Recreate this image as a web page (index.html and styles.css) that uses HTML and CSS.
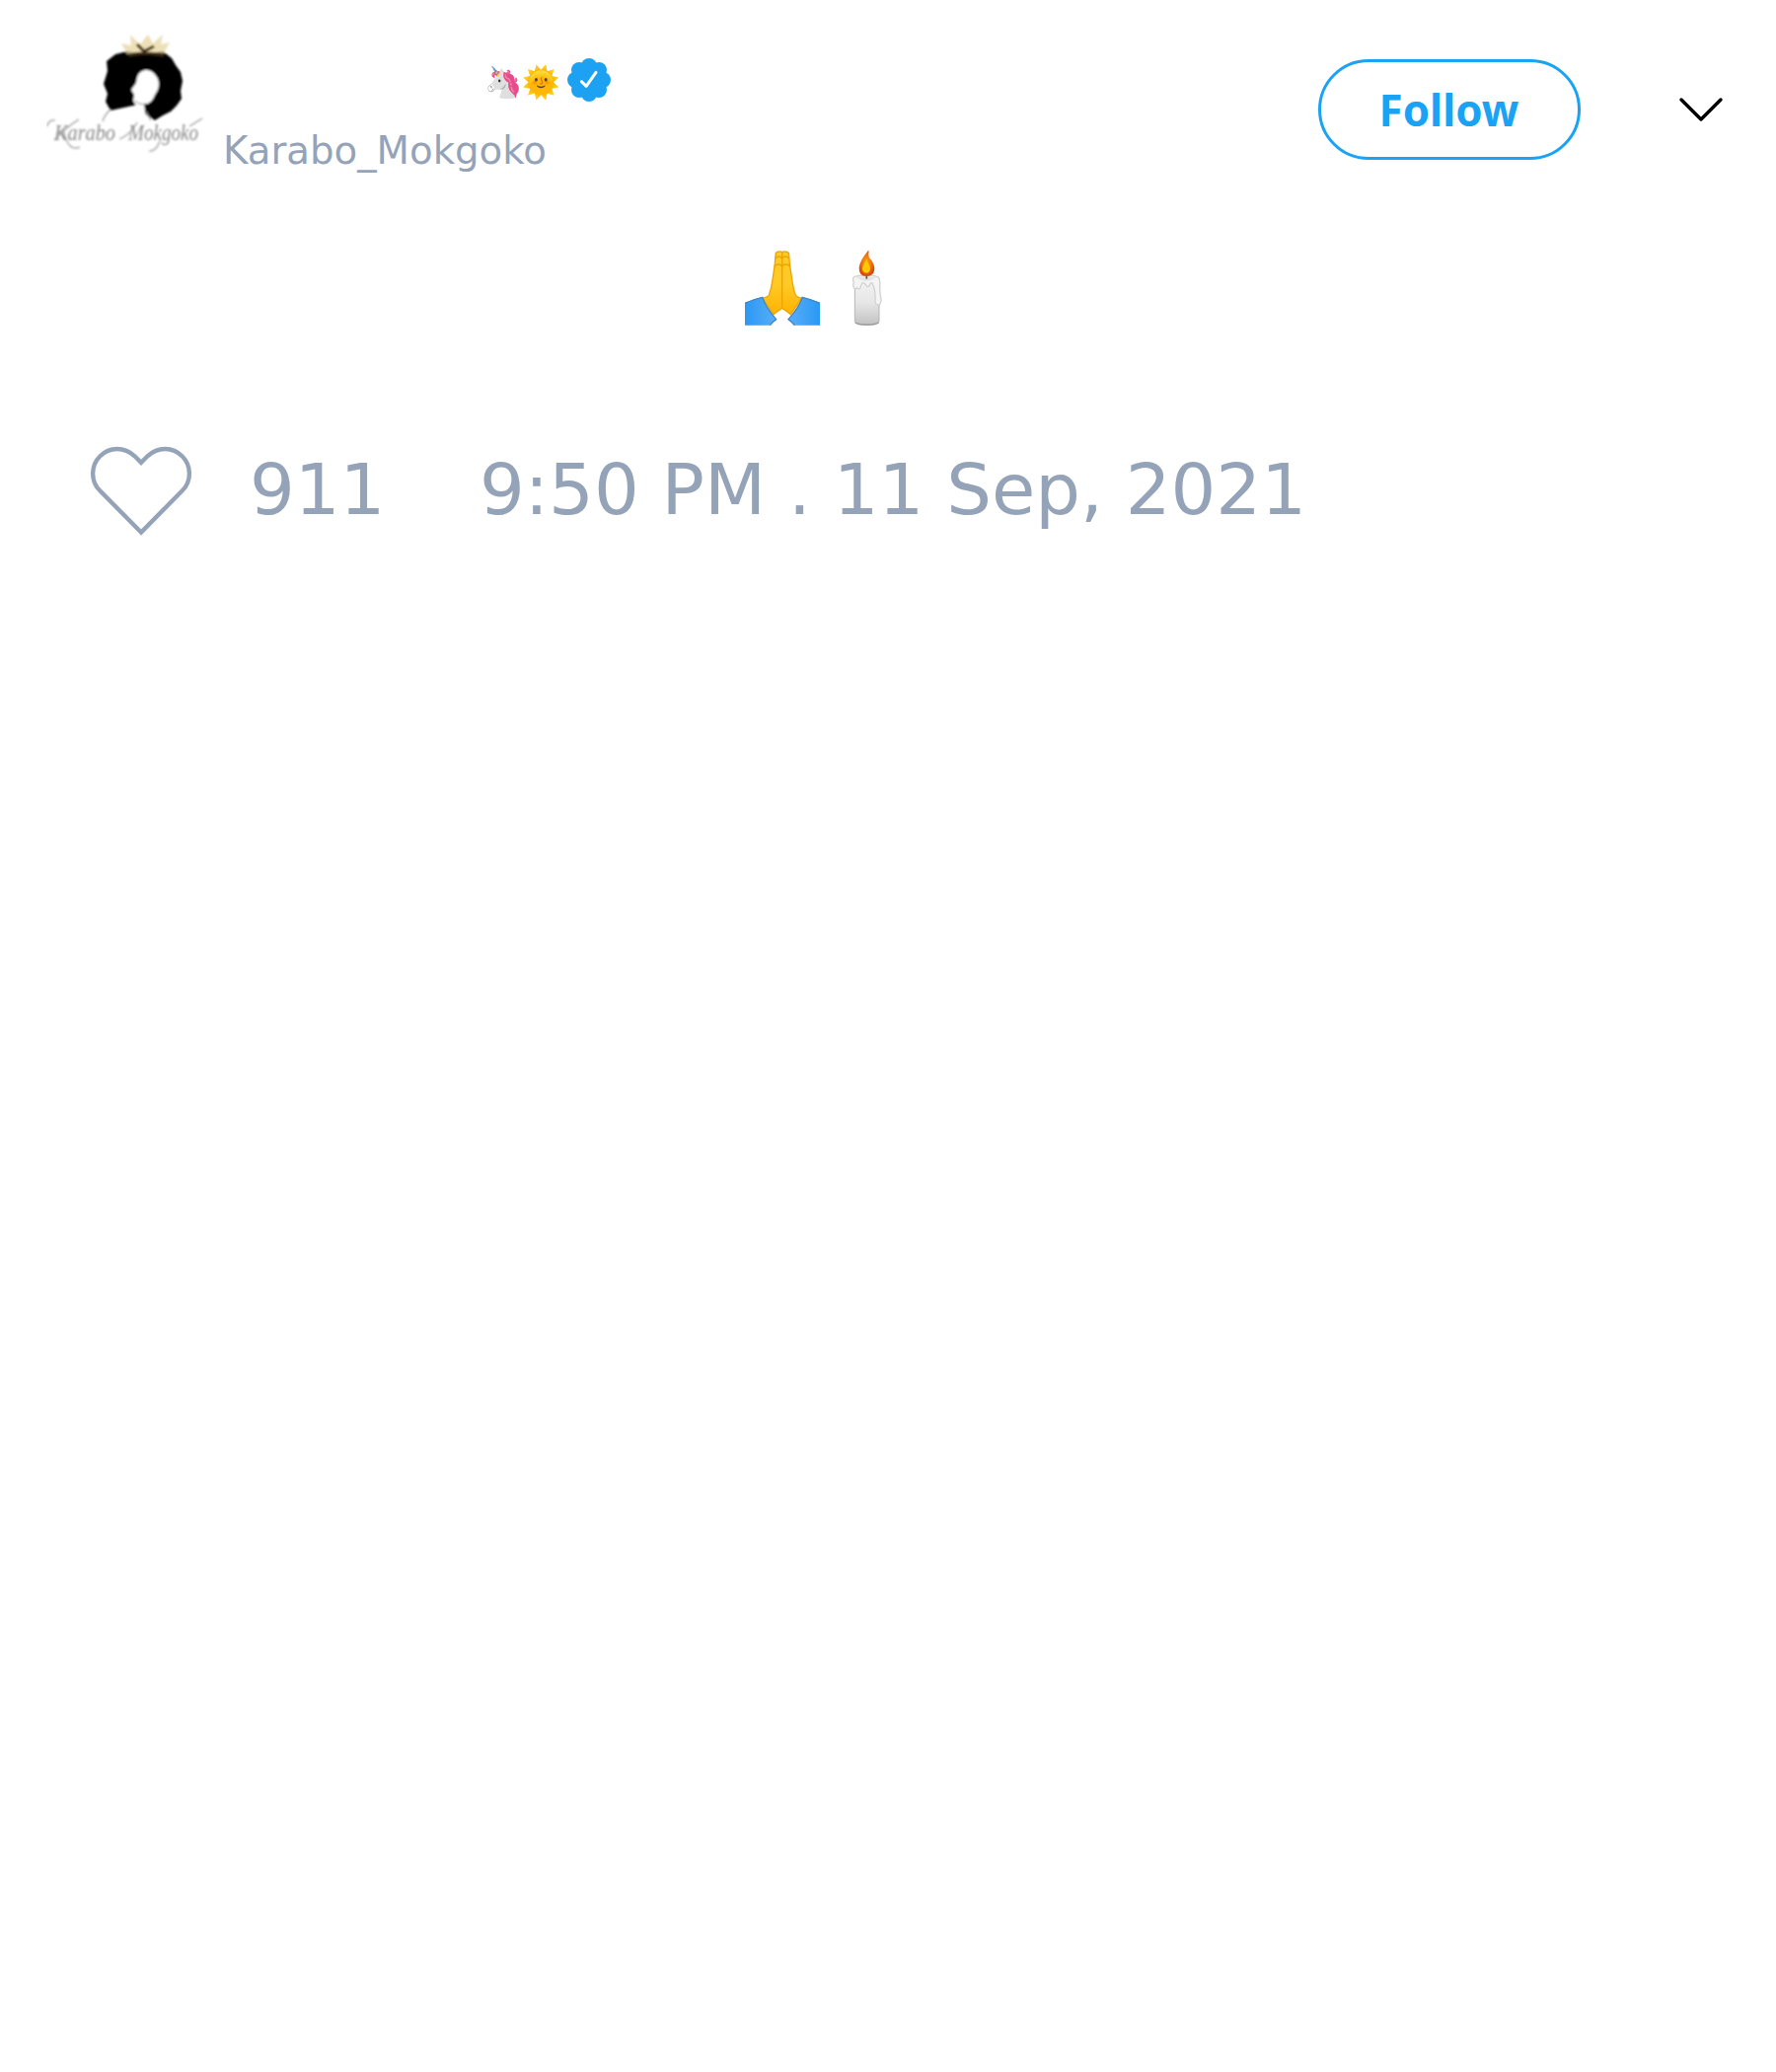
FILE: index.html
```html
<!DOCTYPE html>
<html lang="en">
<head>
<meta charset="utf-8">
<title>Karabo_Mokgoko</title>
<link rel="stylesheet" href="styles.css">
</head>
<body>
<article class="post">
  <header class="head">
    <svg class="avatar" viewBox="0 0 160 160" width="160" height="160">
      <defs>
        <filter id="soft"><feGaussianBlur stdDeviation="1"/></filter>
        <filter id="soft-text"><feGaussianBlur stdDeviation="0.8"/></filter>
      </defs>
      <g filter="url(#soft)">
        <path d="M61 32L70 25L82 22L100 25L118 22L127 29L131 36L136 43L138 52L136 62L137 70L132 77L126 83L118 87L110 92L101 86L98 77L88 77L65 82L60 73L62 65L58 55L62 42Z" fill="#030303"/>
        <path d="M100 41Q92 42 91 54L86 61L89 66L88 72L92 79L100 82L99 76Q107 75 110 66Q116 58 113 50Q108 40 100 41Z" fill="#fff"/>
        <path d="M90 72Q95 77 101 75" fill="none" stroke="#777" stroke-width="1"/>
        <path d="M82 25L76 14L86 16L85 5L95 15L103 5L108 14L118 5L116 15L125 13L119 24Q98 21 82 25Z" fill="#e6d6a0" opacity=".75"/>
        <path d="M84 26Q99 22 119 26M92 15L99 22L109 17" fill="none" stroke="#3a2b12" stroke-width="3"/>
        <path d="M65 81Q59 86 57 93M101 83L106 92" fill="none" stroke="#999" stroke-width="1.2"/>
      </g>
      <g filter="url(#soft-text)">
        <text x="8" y="112" class="signature" textLength="62" lengthAdjust="spacingAndGlyphs">Karabo</text>
        <text x="83" y="112" class="signature" textLength="71" lengthAdjust="spacingAndGlyphs">Mokgoko</text>
        <path d="M1 98Q2 91 9 92M8 112Q20 99 33 91M17 101Q22 125 34 119M74 111Q85 107 92 94M115 113Q111 124 104 123M145 98L158 90" fill="none" stroke="#999" stroke-width="1.2"/>
      </g>
    </svg>
    <div class="identity">
      <div class="name">
        <span class="name-emoji">🦄🌞</span>
        <svg class="verified" viewBox="-22 -22 44 44" width="44" height="44">
          <g fill="#1da1f2">
            <circle r="15"/>
            <circle cy="-14" r="8"/><circle cy="14" r="8"/><circle cx="-14" r="8"/><circle cx="14" r="8"/>
            <circle cx="-10" cy="-10" r="8"/><circle cx="10" cy="-10" r="8"/><circle cx="-10" cy="10" r="8"/><circle cx="10" cy="10" r="8"/>
          </g>
          <path d="M-7.6 1.7L-2.8 6.3L7 -7.6" fill="none" stroke="#fff" stroke-width="3" stroke-linecap="round" stroke-linejoin="round"/>
        </svg>
      </div>
      <div class="handle">Karabo_Mokgoko</div>
    </div>
    <button class="follow">Follow</button>
    <svg class="chevron" viewBox="0 0 48 28" width="48" height="28">
      <path d="M4 4L24 24L44 4" fill="none" stroke="#000" stroke-width="3.4" stroke-linecap="round" stroke-linejoin="round"/>
    </svg>
  </header>
  <div class="message">
    <svg viewBox="75 70 228 228" width="76" height="76" role="img" aria-label="Folded hands">
      <defs>
        <linearGradient id="skin" x1="0" y1="0" x2="0" y2="1"><stop offset=".5" stop-color="#ffca28"/><stop offset="1" stop-color="#ffb300"/></linearGradient>
        <linearGradient id="sleeve-left"><stop offset="0" stop-color="#2a98f4"/><stop offset="1" stop-color="#5aaef8"/></linearGradient>
        <linearGradient id="sleeve-right"><stop offset="0" stop-color="#5aaef8"/><stop offset="1" stop-color="#2a98f4"/></linearGradient>
      </defs>
      <path d="M188 76Q186 72 178 73Q169 73 168 82L166 110L158 165Q154 190 148 205Q143 213 128 214L162 264Q173 254 188 245Q203 254 214 264L248 214Q234 213 229 205Q223 190 219 165L211 110L209 82Q208 73 198 73Q190 72 188 76Z" fill="url(#skin)" stroke="#eda600" stroke-width="4"/>
      <path d="M188 76V243M168 94Q171 88 178 88Q186 88 188 96Q190 88 199 88Q206 88 209 94M165 119Q167 112 177 112Q186 112 188 120Q190 112 200 112Q209 112 212 119" fill="none" stroke="#eda600" stroke-width="4"/>
      <path d="M75 229Q100 218 128 211Q140 246 171 279Q160 286 151 297H75Z" fill="url(#sleeve-left)"/>
      <path d="M303 229Q278 218 250 211Q238 246 206 279Q217 286 226 297H303Z" fill="url(#sleeve-right)"/>
      <path d="M75 230Q100 219 128 212Q140 246 170 279Q160 286 151 297M303 230Q278 219 250 212Q238 246 207 279Q217 286 226 297" fill="none" stroke="#4486c5" stroke-width="4"/>
    </svg>
    <svg class="candle" viewBox="400 70 93 228" width="31" height="76" role="img" aria-label="Candle">
      <defs>
        <linearGradient id="wax" x1="0" y1="0" x2="0" y2="1"><stop offset="0" stop-color="#f3f3f3"/><stop offset=".5" stop-color="#e6e6e6"/><stop offset="1" stop-color="#c2c2c2"/></linearGradient>
        <radialGradient id="flame" cx=".5" cy=".45" r=".6"><stop offset="0" stop-color="#ff9d0a"/><stop offset=".5" stop-color="#ef7410"/><stop offset="1" stop-color="#cf4008"/></radialGradient>
      </defs>
      <path d="M410 160V285Q412 296 447 296Q482 296 484 285V160Z" fill="url(#wax)" stroke="#b5b5b5" stroke-width="3"/>
      <path d="M411 288Q418 295 447 295Q476 295 483 288" fill="none" stroke="#9c9c9c" stroke-width="4"/>
      <path d="M409 149Q425 145 446 146Q470 144 482 151Q488 158 486 180Q487 205 490 217Q491 234 481 235Q471 235 472 220Q473 205 470 188Q467 178 463 169Q458 166 454 177Q449 184 443 174Q438 165 432 170Q427 176 427 184Q422 190 416 183Q415 190 408 184Q403 178 407 166Q401 154 409 149Z" fill="#f4f4f4" stroke="#d2d2d2" stroke-width="4"/>
      <path d="M415 151Q446 148 475 151Q460 163 445 162Q430 163 415 151Z" fill="#e4e4e4"/>
      <path d="M446 140V156" stroke="#6d5148" stroke-width="5"/>
      <path d="M450 71Q426 100 423 121Q422 148 446 148Q469 148 470 124Q469 107 454 92Q450 83 453 71Z" fill="url(#flame)"/>
      <path d="M448 94Q434 112 433 125Q434 138 446 138Q456 137 457 124Q456 115 451 108Q447 103 448 94Z" fill="#ffca05"/>
    </svg>
  </div>
  <footer class="meta">
    <svg class="heart" viewBox="0 0 104 92" width="104" height="92">
      <path d="M52 88.500L10.500 46.500A24.600 24.600 0 0 1 10.500 11.300C20 1.500 35 1.500 45.500 11.300L52 17.800L58.500 11.300C69 1.500 84 1.500 93.500 11.300A24.600 24.600 0 0 1 93.500 46.500Z" fill="none" stroke="#94a3b8" stroke-width="4.400"/>
    </svg>
    <span class="likes">911</span>
    <span class="date">9:50 PM . 11 Sep, 2021</span>
  </footer>
</article>
</body>
</html>
```
FILE: styles.css
```css
body {
  margin: 0;
  background: #fff;
  font-family: "DejaVu Sans", sans-serif;
}
.post {
  width: 1800px;
}
.head {
  display: flex;
  height: 222px;
  align-items: flex-start;
}
.avatar {
  margin: 30px 0 0 47px;
}
.signature {
  font: italic 23px "Liberation Serif", serif;
  fill: #8a8a8a;
}
.identity {
  width: 1109px;
  margin-left: 19px;
  padding: 59px 1px 0 0;
}
.name {
  display: flex;
  height: 44px;
  align-items: center;
  padding-left: 265px;
}
.name-emoji {
  width: 84px;
  padding-top: 5px;
  font-family: "Noto Color Emoji", sans-serif;
  font-size: 31px;
  line-height: 44px;
  white-space: nowrap;
}
.handle {
  margin-top: 25px;
  color: #94a3b8;
  font-size: 38.7px;
  line-height: 50px;
}
.follow {
  box-sizing: border-box;
  width: 266px;
  height: 102px;
  margin-top: 60px;
  padding: 0 1px 0 0;
  border: 3px solid #1aa2f5;
  border-radius: 51px;
  background: none;
  color: #1aa2f5;
  font: bold 43.9px "Noto Sans", sans-serif;
}
.chevron {
  margin: 97px 0 0 98px;
}
.message {
  display: flex;
  height: 198px;
  box-sizing: border-box;
  padding: 32px 0 0 755px;
}
.candle {
  margin-left: 32px;
}
.meta {
  display: flex;
  align-items: flex-start;
  padding: 31px 0 0 91px;
  color: #94a3b8;
  font-size: 72px;
  line-height: 84px;
}
.likes {
  width: 233px;
  margin: 3px 0 0 58px;
}
.date {
  margin-top: 3px;
  white-space: nowrap;
}
```
